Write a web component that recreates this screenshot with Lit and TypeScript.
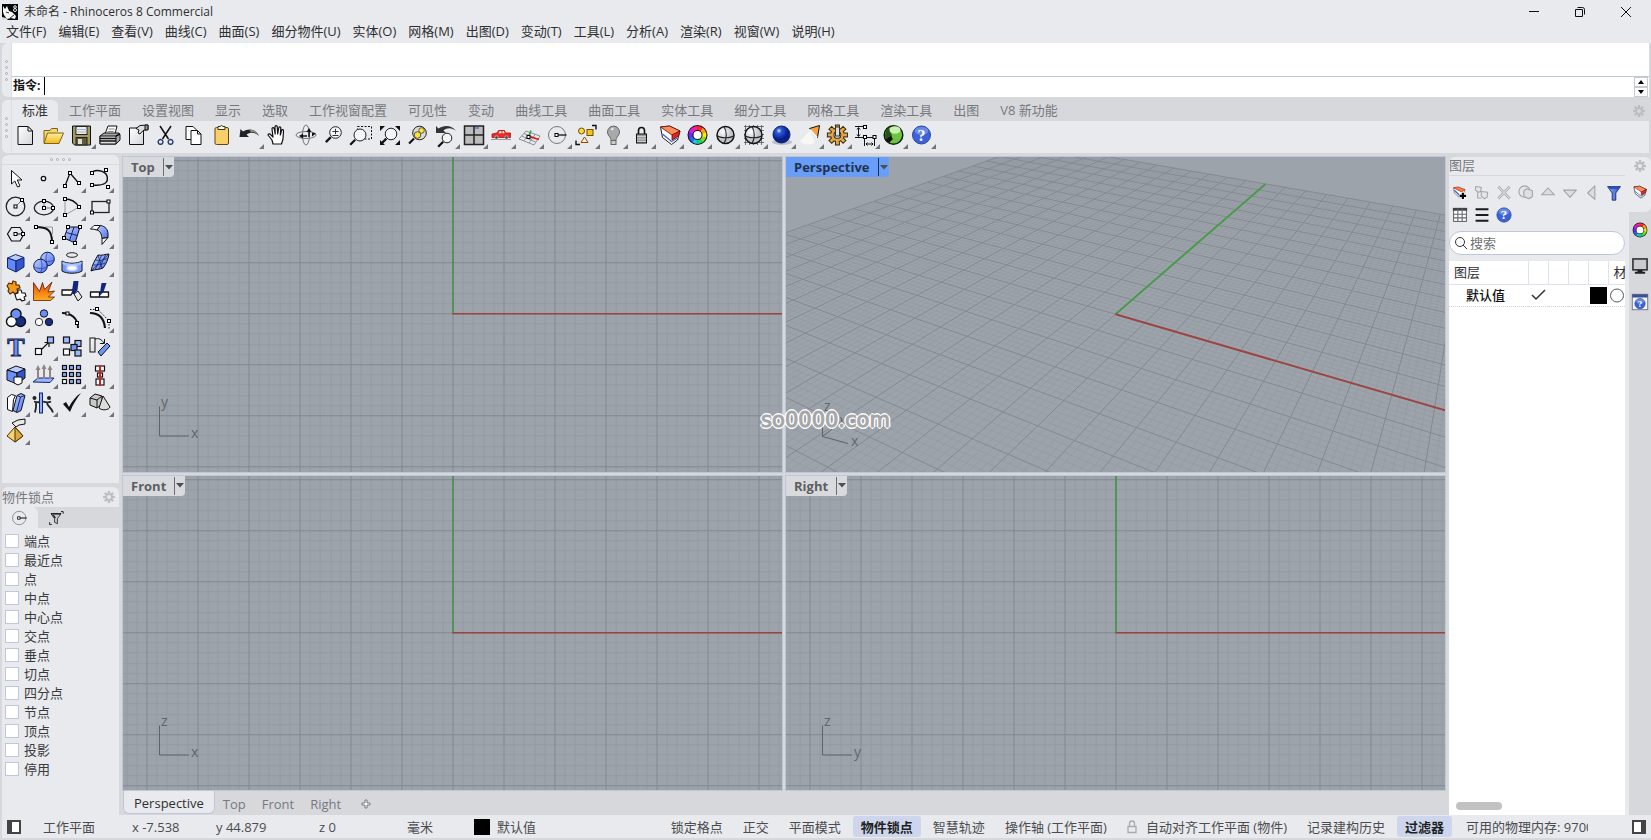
import { LitElement, html, css, svg } from "lit";
import { customElement, property } from "lit/decorators.js";
import { classMap } from "lit/directives/class-map.js";

/* ---------- icon primitives (28 x 28 cell) ---------- */
const K = "#111";
const node = (x: number, y: number) =>
  svg`<rect x=${x - 1.5} y=${y - 1.5} width="3" height="3" fill="#fff" stroke="#000"/>`;
const box = (x: number, y: number, s: number, f: string) =>
  svg`<rect x=${x} y=${y} width=${s} height=${s} fill=${f} stroke="#111" stroke-width="1.2"/>`;
const line = (d: string, c = K, w = 1) =>
  svg`<path d=${d} fill="none" stroke=${c} stroke-width=${w}/>`;
const shape = (d: string, f: string, c = K, w = 1) =>
  svg`<path d=${d} fill=${f} stroke=${c} stroke-width=${w} stroke-linejoin="round"/>`;
const lens = (x: number, y: number, r: number, f = "#f4f5f7") => svg`
  <path d=${`M${x - r * 0.8} ${y + r * 0.8}L${x - r * 0.8 - 5} ${y + r * 0.8 + 5}`} stroke="#111" stroke-width="2.2"/>
  <circle cx=${x} cy=${y} r=${r} fill=${f} stroke="#222"/>`;
const hue = (cx: number, cy: number, r: number, w: number) => {
  const cols = ["#ff2a1f", "#ff9a1a", "#f4ec19", "#7be01f", "#19d06a", "#17c9df", "#2767f5", "#6a2cf0", "#d21fe8", "#ff1f8f"];
  const pt = (a: number) => `${(cx + r * Math.sin(a)).toFixed(2)} ${(cy - r * Math.cos(a)).toFixed(2)}`;
  const st = (Math.PI * 2) / cols.length;
  return svg`<circle cx=${cx} cy=${cy} r=${r} fill="#fff" stroke="#111" stroke-width=${w + 2}/>
    ${cols.map((c, i) => svg`<path d=${`M${pt(i * st)}A${r} ${r} 0 0 1 ${pt((i + 1) * st + 0.03)}`} fill="none" stroke=${c} stroke-width=${w}/>`)}`;
};
const wedge = svg`
  ${shape("M4.500 6l9-1 10.500 5-2.500 9-6 4.500-9-7z", "#fff", "#222")}
  ${line("M6.500 13l9 7.500 6-3.500", "#4a66cf", 1.400)}
  ${shape("M4.500 6l9-1 10.500 5-8 4z", "#ff8a5c", "#5e1408", 0.800)}
  ${shape("M16 14l8-4-1.500 5-6.500 4z", "#e8221a", "#5e1408", 0.800)}`;
const help = (x: number, y: number, r: number) => svg`
  <circle cx=${x} cy=${y} r=${r} fill="#3c62d4" stroke="#2a45a8"/>
  <ellipse cx=${x} cy=${y - r * 0.45} rx=${r * 0.75} ry=${r * 0.45} fill="#7f9df0" opacity=".7"/>
  <text x=${x} y=${y + r * 0.62} text-anchor="middle" font-family="Liberation Serif, serif" font-weight="700" font-size=${Math.round(r * 1.8)} fill="#fff">?</text>`;
const gearPath = (() => {
  let d = "";
  for (let i = 0; i < 8; i++) {
    for (const [o, r] of [[-0.2, 4], [-0.14, 6], [0.14, 6], [0.2, 4]] as const) {
      const a = (i * Math.PI) / 4 + o * 1.4;
      d += `${d ? "L" : "M"}${(7 + r * Math.sin(a)).toFixed(2)} ${(7 - r * Math.cos(a)).toFixed(2)}`;
    }
  }
  return d + "zM9 7a2 2 0 1 0-4 0a2 2 0 1 0 4 0z";
})();
const gear = html`<svg width="14" height="14" viewBox="0 0 14 14" aria-hidden="true"><path d=${gearPath} fill="#bcbdc1" fill-rule="evenodd"/></svg>`;
const snapTarget = svg`<circle cx="13" cy="14" r="8.500" fill="none" stroke="#77797e"/>${line("M13 14h9.500", K, 1.3)}${node(12.5, 14)}`;
const sphere = svg`<circle cx="13.500" cy="14" r="8.500" fill="url(#ball)" stroke="#111" stroke-width="1.500"/>
  ${line("M5 14.500c3 3 14 3 17 0M12 5.500c3 5 3 12 0 17", "#222", 1.100)}`;

type Tool = { name: string; more?: boolean; art: unknown };
const t = (name: string, more: boolean, art: unknown): Tool => ({ name, more, art });

const MAIN_TOOLS: Tool[] = [
  t("新建", false, svg`${shape("M6 5.500h10l4.500 4.500v13.500H6z", "url(#page)")}${shape("M16 5.500V10h4.500z", "#fff")}`),
  t("打开", false, svg`${shape("M4 22V9.500h6l1.500-2h6v3", "#f7d774", "#7d6414")}${shape("M4 22.500l3.500-10.500h16L19 22.500z", "url(#gold)", "#7d6414")}`),
  t("保存", true, svg`${shape("M4.500 5h18v19H6.500l-2-2z", "#a39b5e")}<rect x="8" y="5.500" width="11" height="8" fill="#e9eef3" stroke="#222"/><path d="M8 8.500h11M8 11h11" stroke="#a9b4bd"/><rect x="8" y="16.500" width="11" height="7.500" fill="#5f5a37" stroke="#222"/><rect x="10" y="18" width="4" height="5" fill="#ddd"/>`),
  t("打印", false, svg`${shape("M9 13l3-8h9l-2 8z", "#fff")}${line("M12.500 8h6M11.500 10.500h6", "#888")}${shape("M4 15l4-3h15l1 2v5l-4 4H4z", "#a9a9a9")}${shape("M4 15h16v8H4z", "#dcdcdc")}${line("M4 17.500h16M4 20h16M20 15l4-2", K, 1.4)}`),
  t("文件属性", false, svg`${shape("M5.500 7h14v16.500h-14z", "url(#page)")}${shape("M12 7.500l4-3 8-.5v4.500l-5 1-3 3.500-2-1 1-3z", "#ddd")}${shape("M21 4h3v5h-3z", "#999")}`),
  t("剪切", false, svg`${line("M8 5l8.500 13M19 5l-8.500 13", K, 1.500)}${line("M8.500 18.500a2.400 2.400 0 1 0 .1 0zM18.500 18.500a2.400 2.400 0 1 0 .1 0z", "#23366f", 1.400)}`),
  t("复制", false, svg`${shape("M6 5.500h7l3 3v10H6z", "#fff")}${shape("M11 9.500h6.500l3.500 3.500v10.500H11z", "#fff")}${line("M17.500 9.500V13H21")}`),
  t("粘贴", false, svg`<rect x="7" y="6.500" width="13.500" height="17" rx="1.500" fill="#f8cf69" stroke="#5f4610"/><path d="M10 8.500h7v-3h-2l-1.500-1-1.500 1h-2z" fill="#fffdd0" stroke="#333"/>`),
  t("撤销", true, svg`<path d="M3.500 16l1-8 2.500 2.500C12 7 20 7.500 23 15c-4-4-9-4-12.500-1.500L13 16z" fill="#222"/><path d="M13 8.500c5 0 8 2 10 6.500-2-2.500-5-4-8-4z" fill="#8a8a8a"/>`),
  t("平移", false, shape("M9 23l-1-4-4-5c0-1.500 2-1.500 3 0l2 2-1-8c0-1.800 2-1.800 2.300 0l.9 5-.2-7c0-1.800 2.200-1.800 2.300 0l.4 7 1-6c.3-1.700 2.300-1.400 2.100.3l-.5 6.700 1.200-4.500c.5-1.500 2.300-1 2 .5L19 18l-1.500 5z", "#fff", K, 1.2)),
  t("旋转视图", false, svg`<ellipse cx="14" cy="14" rx="10" ry="3.500" fill="none" stroke="#777"/><ellipse cx="14" cy="14" rx="3.500" ry="10" fill="none" stroke="#777"/>${line("M17 10v6M10 15h5", K, 1.500)}<path d="M14.500 11l2.500-4 2.500 4zM11 12.500l-4 2.500 4 2.500zM24 12.500l-4-1v4z" fill="#111"/>`),
  t("缩放", false, svg`${lens(15.500, 11.500, 5.800)}${line("M12.500 10.500h6M15.500 7.800v5.400M12.500 14.500h6", "#333")}`),
  t("框选缩放", false, svg`<rect x="9.500" y="5.500" width="14" height="12.500" fill="none" stroke="#111" stroke-dasharray="2 1.500"/>${lens(12, 14, 6)}`),
  t("缩放至全部", false, svg`${lens(15, 13, 5.800)}<path d="M4 5h5L4 10zM24 5v5l-5-5zM4 24v-5l5 5zM24 24h-5l5-5z" fill="#111"/>`),
  t("缩放至选取", false, svg`${lens(15.500, 12, 6.800, "#dcdcdc")}<circle cx="17.500" cy="9.500" r="2.800" fill="#ffe52e" stroke="#555"/><circle cx="13.500" cy="14" r="3.300" fill="#ffe52e" stroke="#555"/>`),
  t("复原视图", true, svg`<path d="M4 12V5l2.500 2.500C12 3.500 20 4 24 10c-4-3.500-9-3.500-12.500-.5L14 12z" fill="#333"/>${lens(15, 17, 4.800)}`),
  t("四个视图", true, svg`<rect x="4.500" y="5" width="19" height="18.500" fill="#bdbdbd" stroke="#222" stroke-width="1.500"/><path d="M14 5v18.500M4.500 14h19" stroke="#222" stroke-width="1.500"/><path d="M14 7h5" stroke="#2a4ec9"/>`),
  t("图纸视图", true, svg`${line("M3 18.500h20", "#999")}${shape("M4 13l5-1 1.500-2.500h6l1 2.500h5v4.500H4z", "#ee2a24", "#a3120e", 0.8)}<path d="M11.500 10.300h2v2h-3zM14.500 10.300h1.500l.5 2h-2z" fill="#fff"/><circle cx="8.500" cy="16.500" r="1.700" fill="#444" stroke="#ddd" stroke-width=".6"/><circle cx="18.500" cy="16.500" r="1.700" fill="#444" stroke="#ddd" stroke-width=".6"/>`),
  t("工作平面", true, svg`${line("M3 18l7-8 14 5-6 9zM5.500 15l14 6M8 12.500l14 5.500M7.500 20l7-8.500M13 22l6.500-9", "#8f9095")}${line("M13 15.500l2-6", "#1fa83a", 1.5)}${line("M13 15.500l10 3", "#e02020", 1.8)}${node(12.5, 16)}`),
  t("物件锁点", true, snapTarget),
  t("选取", true, svg`${line("M4 19.500v4h4M20 4.500h4v4", K, 1.400)}<circle cx="9.500" cy="10" r="3" fill="#ffd93c" stroke="#6d5200"/><rect x="15" y="8.500" width="6" height="6" fill="#f8c01f" stroke="#6d5200"/>${shape("M12.500 16l3.500 5.500H9z", "#fff3d8", "#8d4c00")}`),
  t("隐藏", true, svg`<path d="M13.500 5a6 6 0 0 1 4.500 10c-1.500 1.500-2 3-2 4.500h-5c0-1.500-.5-3-2-4.500A6 6 0 0 1 13.500 5z" fill="#a9a9a9" stroke="#666"/><path d="M11.500 9a3 3 0 0 1 2-1.500" stroke="#eee" stroke-width="2"/><rect x="11" y="19.500" width="5" height="4" fill="#ccc" stroke="#666"/>`),
  t("锁定", true, svg`${line("M10.500 13V9.500a3 3 0 0 1 6 0V13", K, 1.600)}<rect x="8.500" y="13" width="10" height="9" fill="#999" stroke="#111"/>${line("M9 15.500h9M9 18h9M9 20.500h9", "#ccc")}`),
  t("图层", true, wedge),
  t("属性", true, hue(13.5, 14, 7, 4)),
  t("着色", true, sphere),
  t("着色选取", true, svg`${line("M4 5.500h20M4 9.500h20M4 13.500h20M4 17.500h20M4 21.500h20M5.500 4v20M9.500 4v20M13.500 4v20M17.500 4v20M21.500 4v20", "#55575c", 0.800)}${sphere}`),
  t("渲染", true, svg`<ellipse cx="14" cy="21" rx="10" ry="3" fill="#b9bdcc"/><circle cx="13.500" cy="13.500" r="8.500" fill="url(#blue)" stroke="#0b1e63"/>`),
  t("聚光灯", true, svg`<path d="M14 10L4 20c2 4 10 5 15 1z" fill="#f7f7f4"/>${shape("M13.500 7.500l10-3-2 12z", "#f6a339")}<path d="M14 8.500l7 7.500" stroke="#fff" stroke-width="1.500"/>`),
  t("选项", true, svg`<path d=${gearPath} transform="translate(1.500 2) scale(1.700)" fill="#e0a84c" fill-rule="evenodd" stroke="#3b2808" stroke-width=".6"/><rect x="11.500" y="6" width="4" height="9" fill="#ddd" stroke="#333"/>`),
  t("尺寸标注", true, svg`${line("M3 5.500h8M3 16.500h8M6.500 7v8M5 8.500L6.500 6.500 8 8.500M5 13.500l1.500 2 1.500-2M12.500 16v9M22.500 15v10M14 23h7M15.500 21.500L14 23l1.500 1.500M19.500 21.500L21 23l-1.500 1.500M11 5.500h3M11 16.500h11")}${node(13, 6)}${node(13, 16)}${node(22.500, 16)}`),
  t("Grasshopper", true, svg`<circle cx="13.500" cy="14" r="9.300" fill="#6cc43c" stroke="#0d2107" stroke-width="1.500"/><path d="M9 6.500c-5 4-5 11-1 14.500l4-6z" fill="#25521a"/><ellipse cx="15" cy="9" rx="5.500" ry="3.800" fill="#c9efb2"/><path d="M5 19l6-4 2 3-4 4z" fill="#111"/>`),
  t("说明", true, help(13.5, 14, 9)),
];

const BL = "url(#bl)";
const cubeArt = svg`${shape("M5.500 9l8-3.500 8.500 3-8 3.500z", "#b9ccff", "#14266b")}${shape("M5.500 9l8.500 3V23L5.500 19z", "#6288fb", "#14266b")}${shape("M14 12l8-3.500V18l-8 5z", "#3453cf", "#14266b")}`;
const SIDE_TOOLS: Tool[] = [
  t("选取", false, shape("M9.500 5.500v13.500l3.300-3 2.700 6 2.500-1-2.700-6h4.700z", "#fff")),
  t("点", true, svg`<circle cx="13.500" cy="13.500" r="2.200" fill="#fff" stroke="#111" stroke-width="1.300"/>`),
  t("多重直线", true, svg`${line("M7 21l5-13 9 10.500", K, 1.300)}${node(7, 21)}${node(12, 8)}${node(21, 18)}`),
  t("曲线", true, svg`${line("M6 8C8 4 19 5 21 11c2 7-3 10-15 9", K, 1.400)}${node(6, 8)}${node(20, 5)}${node(6, 20)}${node(22, 22)}`),
  t("圆", true, svg`<circle cx="13.500" cy="13.500" r="9.300" fill="none" stroke="#222" stroke-width="1.300"/>${line("M13.500 13.500l6.500-6.500", "#777")}${node(13.500, 13.500)}${node(20, 7)}`),
  t("椭圆", true, svg`<ellipse cx="14" cy="15" rx="9.700" ry="6.800" fill="none" stroke="#222" stroke-width="1.300"/>${line("M14 8v7h9", "#777")}${node(14, 8)}${node(14, 15)}${node(23, 15)}`),
  t("圆弧", true, svg`${line("M7 22V6M7 22l14-8", "#999")}${line("M7 6c6 0 11 3 14 8", K, 1.400)}${node(7, 6)}${node(21, 14)}${node(7, 22)}`),
  t("矩形", true, svg`<rect x="6" y="8.500" width="17" height="11" fill="none" stroke="#222" stroke-width="1.300"/>${node(22.500, 8.500)}${node(6, 19.500)}`),
  t("多边形", true, svg`${line("M9.500 6.500h8.500l4 6.500-4 7H9.500l-4-7z", K, 1.200)}${line("M13.500 13h8")}${node(13.500, 13)}${node(21, 13)}`),
  t("曲线圆角", true, svg`${line("M15 6h7.500v7", "#999")}${line("M6 6c11 0 16 3 16 15", K, 2)}${node(6, 6)}${node(22, 21)}`),
  t("曲面", true, svg`${shape("M10 6h12l-5 16-11-5z", BL)}${line("M16 6l-4.500 13.500M8 11.500l11.500 3", "#14266b")}${node(10, 6)}${node(22, 6)}${node(17, 22)}${node(6, 17)}`),
  t("扫掠", true, svg`${shape("M4.500 8l3.500-3.500h6.500L11 9c-2-.7-4-1-6.500-1z", "#fff")}${shape("M11 9l3.500-4.500c5 1 7.500 4 7.500 8.500v3.500l-6 1c-.5-5-2-7.500-5-8.500z", BL)}${shape("M16 17.500l6-1-6 7z", "#fff")}`),
  t("立方体", true, cubeArt),
  t("球体", true, svg`<circle cx="17.500" cy="10" r="6.800" fill=${BL} stroke="#0f1c4f"/>${line("M17.500 3.200c-2 4-2 9 0 13.600M11 11c4 2 9 2 13 0", "#2b4199", .8)}<circle cx="10.500" cy="17" r="6.800" fill=${BL} stroke="#0f1c4f"/>${line("M10.500 10.200c2 4 2 9 0 13.600M4 18c4 2 9 2 13 0", "#2b4199", .8)}`),
  t("投影曲线", true, svg`<ellipse cx="14" cy="6" rx="5.500" ry="2.300" fill="none" stroke="#222"/>${shape("M4 12c5 3 15 3 20 0v10c-5 3-15 3-20 0z", "#7d9cff")}<path d="M4.500 12.500c5 3 14 3 19 0v2.500c-5 3-14 3-19 0z" fill="#a9c0ff"/><ellipse cx="14" cy="19" rx="5" ry="2.500" fill="#fff" stroke="#c6d4ff" stroke-width="1.500"/>`),
  t("网格", true, svg`${shape("M12 6c4 1 7-1 11-1-1 6-3 10-6 14-4 2-8 1-12 3 1-6 4-11 7-16z", BL)}${line("M9.500 11c4 1 8 0 12-1.500M7 16c4 0 8 0 12-2M15.500 6.500L9 21M19.500 6L13 20M12 6l4 13M22.500 5.500L6 21", "#14266b", .8)}`),
  t("组合", true, svg`${shape("M5 9l2-3 3 1 1-3 3 1v3l3 0 1 3-3 1 1 3-3 2-2-2-3 2-2-3 1-2z", "#f39a1e", "#4f2d00", 1.200)}${shape("M13 17l3-1 0-3 3 0 1 3 3 0 1 3-2 1 1 3-3 1-2-2-3 1-1-2z", "#fff", K, 1.100)}`),
  t("炸开", false, shape("M3.500 23.500V5.500l6 9 3-9 2 7L22 5l-4 10 6.500-1-6 6 6 0-4 3.500z", "url(#fire)", "#5e1c00", .8)),
  t("修剪", false, svg`${shape("M4 13h12l-3 5H4z", "#fff", K, 1.300)}<path d="M15.500 4h5l-1 9-3 4h-3z" fill="#12277c"/>${shape("M16 17l4-3 4 6-4 4z", "#e6e6e6")}`),
  t("分割", false, svg`${shape("M4.500 15h9v5h-9zM13.500 15h9v5h-9z", "#fff", K, 1.300)}<path d="M15.500 6h5l-3 9-4 4z" fill="#12277c"/>`),
  t("群组", true, svg`<g stroke="#111" stroke-width="3.500"><circle cx="14" cy="9" r="4"/><circle cx="9.500" cy="16.500" r="4"/><circle cx="18.500" cy="16.500" r="4"/></g><circle cx="9.500" cy="16.500" r="4.300" fill="#fff"/><circle cx="18.500" cy="16.500" r="4.300" fill="#16307f"/><circle cx="14" cy="9" r="4.300" fill="#6c8ff5"/>`),
  t("解散群组", false, svg`<circle cx="14" cy="8.500" r="3.700" fill="#6c8ff5" stroke="#111"/><circle cx="9" cy="17" r="3.700" fill="#fff" stroke="#333"/><circle cx="19" cy="17" r="3.700" fill="#16307f" stroke="#111"/>`),
  t("显示控制点", false, svg`${line("M4 8c9 0 16 5 16 15", K, 2)}${node(9.500, 8.500)}${node(19, 18)}`),
  t("编辑点", true, svg`${line("M4 8c9 0 14 5 15 15", K, 2.200)}<path d="M4 4.500h8l11 11.500v8" fill="none" stroke="#111" stroke-dasharray="1.500 1.500"/>${node(11, 4)}${node(23, 16)}`),
  t("文字物件", false, svg`<text x="14" y="23" text-anchor="middle" font-family="Liberation Serif, serif" font-weight="700" font-size="26" fill="#6c8ff5" stroke="#101c52" stroke-width="1">T</text>`),
  t("移动", true, svg`${line("M12 16l6-6M14.500 9.500H19V14", K, 1.200)}${box(5.500, 15.500, 6, "#fff")}${box(17.500, 4, 6, "#9db9ff")}`),
  t("阵列", false, svg`${box(5.500, 4, 6, "#9db9ff")}${box(17, 7.500, 6, "#9db9ff")}${box(13, 11.500, 6, "#6f94f5")}${box(5.500, 16, 6, "#fff")}${box(17, 17, 6, "#9db9ff")}`),
  t("旋转", false, svg`<rect x="4" y="5" width="5" height="14" fill="url(#page)" stroke="#111"/>${line("M9 6c4-1 6 0 9 4M18.500 6v4.500H14")}${shape("M12 19l9-9 3 3-9 10z", "#6f94f5")}`),
  t("布尔运算", true, svg`${shape("M5 9l9-4 9 3-8 4z", "#b9ccff")}${shape("M5 9l10 3v11L5 19z", "#6b90fb")}${shape("M15 12l8-4v9l-8 6z", "#3453cf")}${shape("M12 16h8v6l-4 2-4-2z", "#fff")}`),
  t("挤出", true, svg`${shape("M3 21l5-4h16l-4 4.500z", "#9ab4ff", "#14266b")}${line("M8 18V7M14 18V6M20 18V7", "#8e8782", 2)}<path d="M5.500 9L8 4l2.500 5zM11.500 8L14 3l2.500 5zM17.500 9L20 4l2.500 5z" fill="#8e8782"/>`),
  t("矩形阵列", true, svg`${[4.500, 11.500, 18.500].map((y, r) => [4.500, 11.500, 18.500].map((x, c) => box(x, y, 4, r === 2 && c === 0 ? "#fff" : "#8eabff")))}`),
  t("对齐", true, svg`<g fill="#fff" stroke="#111" stroke-width="1.200"><rect x="9.500" y="5" width="9" height="5"/><rect x="11.500" y="12" width="5" height="4"/><rect x="10" y="18" width="8" height="6"/></g>${line("M14 4v21", "#d02020", 2)}`),
  t("镜像", true, svg`${shape("M5.500 8.500l4-3 4 1-2 4-1 12-5-2z", "#fff")}${shape("M15 6.500l4-2 4 2-4 15-4 2-4-2z", BL)}${line("M15 6.500l3.500 1.500 4.500-1.500M18.500 8l-4 15", "#14266b")}`),
  t("变形", true, svg`<circle cx="4.500" cy="9" r="2" fill="#222"/><circle cx="19" cy="9" r="2" fill="#222"/>${line("M4 12.500c3 1 6 1 9 0M6 13.500v5l-1 5M21 12.500c-2 1-5 1-8 0M17 13.500c0 4 4 4 6 10", "#222", 1.800)}<rect x="9.500" y="4" width="3" height="20" fill="#8eabff" stroke="#14266b"/>`),
  t("检查", true, svg`<path d="M5 15l3-2 3 5C14 12 18 7 23 4c-4 5-8 11-11 19z" fill="#111"/>`),
  t("实体工具", true, svg`${shape("M4 9l5-4 7 2v8l-5 4-7-3z", "#c9c9c9")}${line("M4 9l7 2 5-4M11 11v8")}${shape("M17 7l7 11c-1 3-8 4-11 1z", "#dcdcdc")}`),
  t("显示方向", true, svg`${shape("M10 6l6-3 7-1v5l-6 1-3 2z", "#e9e9e9")}${shape("M13 10l8 9-8 6-8-6z", "#f6d371", "#4a3000")}${shape("M13 10l8 9-8 6z", "#d8aa42", "#4a3000")}`),
];

const LAYER_TOOLS: Tool[] = [
  t("新图层", false, svg`${shape("M5 7l5 1 11 1-2 8-5 4-8-7z", "#fff", "#667")}${shape("M5 6.500l7-1 9 4-5 3z", "#ff7c4c", "#a33a18")}${line("M6 10l8 8", "#4a66cf", 2)}<path d="M13 18h10M18 13v10" stroke="#fff" stroke-width="5"/><path d="M13.500 18h9M18 13.500v9" stroke="#000" stroke-width="3"/>`),
  t("子图层", false, svg`${shape("M5 5l8 1-1 6-3 1-4-3zM13 12l9 1-1 7-4 2-4-4z", "#e6e6e6", "#a3a4a8", 1.500)}${line("M8 13v8h5", "#a3a4a8", 1.500)}`),
  t("删除", false, svg`${line("M6 5l16 17M22 5L6 22", "#a3a4a8", 3.500)}${line("M6 5l16 17M22 5L6 22", "#dcdde0", 1.500)}`),
  t("复制图层", false, svg`<circle cx="12" cy="12" r="8" fill="#e6e6e6" stroke="#a3a4a8" stroke-width="1.500"/>${shape("M11 11l4-3 8 3v8l-5 3-7-3z", "#dedfe1", "#a3a4a8", 1.500)}`),
  t("上移", false, shape("M14 7l9 9.500H5z", "#dcdde0", "#a3a4a8", 1.500)),
  t("下移", false, shape("M14 20l9-10H5z", "#dcdde0", "#a3a4a8", 1.500)),
  t("上一层", false, shape("M18 4v19L8 14z", "#dcdde0", "#a3a4a8", 1.500)),
  t("过滤", false, svg`${shape("M5 5h18l-6.500 9V24h-5V14z", "url(#blue2)", "#17307a", 1.300)}<ellipse cx="14" cy="6.500" rx="7.500" ry="1.800" fill="#2c50b5"/>`),
  t("栏位", false, svg`<rect x="5" y="5" width="18" height="18" fill="#fff" stroke="#66686d" stroke-width="1.500"/><rect x="4" y="4" width="20" height="4" fill="#3f4145"/>${line("M11 5v18M17 5v18M5 13h18M5 18h18", "#66686d", 1.500)}`),
  t("菜单", false, line("M5 6h18M5 14h18M5 22h18", "#1b1b1b", 3)),
  t("说明", false, help(14, 14, 10)),
];
const SIDE_TABS: Tool[] = [
  t("属性", false, hue(14, 14, 8.5, 4)),
  t("显示", false, svg`<rect x="3" y="3" width="22" height="17" fill="#c9cbd0" stroke="#333" stroke-width="2.500"/><path d="M10 20h8v3h4v3H6v-3h4z" fill="#222"/>`),
  t("说明", false, svg`<rect x="2" y="2" width="24" height="24" fill="#f4f5f8" stroke="#6d7899" stroke-width="1.500"/><path d="M2 2h24v5H2z" fill="#3a4f8f"/>${help(14, 16.500, 8)}`),
];

/* gradients that the icons refer to */
const defs = svg`<defs>
  <linearGradient id="page" x2="1" y2="1"><stop offset="0" stop-color="#fff"/><stop offset="1" stop-color="#d3d5d9"/></linearGradient>
  <linearGradient id="gold" x2="0" y2="1"><stop offset="0" stop-color="#fff0a0"/><stop offset="1" stop-color="#f4b71c"/></linearGradient>
  <linearGradient id="fire" x2="0" y2="1"><stop offset="0" stop-color="#e8480c"/><stop offset="1" stop-color="#ffae1e"/></linearGradient>
  <linearGradient id="bl" x2="1" y2="1"><stop offset="0" stop-color="#c3d2ff"/><stop offset="1" stop-color="#4a6ff0"/></linearGradient>
  <linearGradient id="blue2" x2="1"><stop offset="0" stop-color="#8fb0ff"/><stop offset="1" stop-color="#2a52c4"/></linearGradient>
  <radialGradient id="ball" cx=".35" cy=".3"><stop offset="0" stop-color="#fff"/><stop offset="1" stop-color="#c2c4c9"/></radialGradient>
  <radialGradient id="blue" cx=".35" cy=".28"><stop offset="0" stop-color="#dfe8ff"/><stop offset=".3" stop-color="#2d5be0"/><stop offset="1" stop-color="#0a1f8a"/></radialGradient>
</defs>`;
const glyph = (art: unknown, size = 28) =>
  html`<svg width=${size} height=${size} viewBox="0 0 28 28" aria-hidden="true">${defs}${art}</svg>`;

/* ---------- modelling viewport ---------- */
const MINOR = "#949aa2";
const MAJOR = "#858991";
const STEP = 10.2;
const SPAN = 70;

/** Homography of the construction plane relative to the viewport centre; units are major squares. */
const project = (u: number, v: number): [number, number] => {
  const d = 1 - 0.02156 * u + 0.0449 * v;
  return [(28.58 * u + 17.45 * v) / d, (8.33 * u - 15.16 * v) / d];
};
const seg = (u1: number, v1: number, u2: number, v2: number) =>
  `M${project(u1, v1).map((n) => n.toFixed(2)).join(" ")}L${project(u2, v2).map((n) => n.toFixed(2)).join(" ")}`;

const planePaths = (() => {
  let minor = "";
  let major = "";
  for (let k = -SPAN; k <= SPAN; k++) {
    const s = k / 5;
    const d = seg(s, -14, s, 14) + seg(-14, s, 14, s);
    if (k % 5) minor += d;
    else major += d;
  }
  return { minor, major };
})();
const orthoPaths = (() => {
  let minor = "";
  let major = "";
  const e = SPAN * STEP;
  for (let k = -SPAN; k <= SPAN; k++) {
    const p = Math.round(k * STEP);
    const d = `M${p + 0.5} ${-e}V${e}M${-e} ${p - 0.5}H${e}`;
    if (k % 5) minor += d;
    else major += d;
  }
  return { minor, major };
})();

@customElement("view-pane")
export class ViewPane extends LitElement {
  @property() name = "";
  @property() axes = "x,y";
  @property({ type: Boolean }) perspective = false;
  @property({ type: Boolean }) active = false;

  static styles = css`
    :host { display: block; position: relative; overflow: hidden; background: #9da3ab; outline: 1px solid #bfc6d8; }
    .canvas { position: absolute; inset: 0; width: 100%; height: 100%; }
    .mark { font: 14px "Open Sans", sans-serif; fill: #63656a; }
    .title { position: absolute; top: 0; left: 0; display: flex; align-items: center; height: 20px; background: #d9dade; border-radius: 0 0 4px 0; }
    .title.active { background: #689df8; }
    button { border: 0; background: none; margin: 0; padding: 0; height: 20px; font: 700 13px/20px "Open Sans", sans-serif; color: #5c5e62; }
    .name { padding: 0 8px; }
    .active .name { color: #22324e; }
    .drop { width: 11px; height: 18px; border-left: 1px solid #6c6e73; display: grid; place-items: center; }
    .active .drop { border-color: #22324e; color: #22324e; }
  `;

  render() {
    const paths = this.perspective ? planePaths : orthoPaths;
    const [h, v] = this.axes.split(",");
    return html`
      <svg class="canvas" aria-label=${this.name}>
        <svg x="50%" y="50%" overflow="visible">
          <path d=${paths.minor} fill="none" stroke=${MINOR} stroke-width=${this.perspective ? 0.7 : 1}></path>
          <path d=${paths.major} fill="none" stroke=${MAJOR} stroke-width="1"></path>
          ${this.perspective
            ? svg`<path d=${seg(0, 0, 0, 14)} stroke="#4a9a4c" stroke-width="2"/><path d=${seg(0, 0, 14, 0)} stroke="#9c4643" stroke-width="2"/>`
            : svg`<path d="M.500 0V-714" stroke="#45924a" stroke-width="1.600"/><path d="M0 -.500H714" stroke="#99443f" stroke-width="1.600"/>`}
        </svg>
        <svg x="0" y="100%" overflow="visible">
          ${this.perspective
            ? svg`<path d="M36.500 -60V-35L62 -28M36.500 -35L56 -50" fill="none" stroke="#606267"/>
                <text class="mark" x="38" y="-61">z</text><text class="mark" x="54" y="-47">y</text><text class="mark" x="65" y="-26">x</text>`
            : svg`<path d="M36.500 -65V-35.500H66" fill="none" stroke="#606267"/>
                <text class="mark" x="38" y="-65">${v}</text><text class="mark" x="68" y="-34">${h}</text>`}
        </svg>
      </svg>
      <div class=${classMap({ title: true, active: this.active })}>
        <button class="name">${this.name}</button>
        <button class="drop" aria-label=${`${this.name} 菜单`}>
          <svg width="8" height="5" viewBox="0 0 8 5"><path d="M0 0h8L4 4.500z" fill="#4c4e52"/></svg>
        </button>
      </div>`;
  }
}

/* ---------- application shell ---------- */
const MENUS = ["文件(F)", "编辑(E)", "查看(V)", "曲线(C)", "曲面(S)", "细分物件(U)", "实体(O)", "网格(M)", "出图(D)", "变动(T)", "工具(L)", "分析(A)", "渲染(R)", "视窗(W)", "说明(H)"];
const TABS = ["标准", "工作平面", "设置视图", "显示", "选取", "工作视窗配置", "可见性", "变动", "曲线工具", "曲面工具", "实体工具", "细分工具", "网格工具", "渲染工具", "出图", "V8 新功能"];
const SNAPS = ["端点", "最近点", "点", "中点", "中心点", "交点", "垂点", "切点", "四分点", "节点", "顶点", "投影", "停用"];

@customElement("app-root")
export class AppRoot extends LitElement {
  static styles = css`
    :host {
      display: flex; flex-direction: column; height: 100vh; min-height: 700px; box-sizing: border-box; padding-bottom: 2px;
      background: #d7d8dc; color: #2e2f31; overflow: hidden;
      font: 13px/20px "Open Sans", "Noto Sans CJK SC", sans-serif;
    }
    * { box-sizing: border-box; }
    button { border: 0; margin: 0; padding: 0; background: none; font: inherit; color: inherit; white-space: nowrap; }
    svg { display: block; }

    .titlebar { display: flex; align-items: center; height: 22px; background: #e9eaee; padding: 1px 2px 0; gap: 6px; }
    .titlebar h1 { margin: 0; font-size: 12px; font-weight: 400; flex: 1; }
    .win { width: 46px; height: 20px; display: grid; place-items: center; }
    .menubar { display: flex; align-items: flex-start; gap: 12px; height: 21px; background: #e9eaee; padding-left: 6px; line-height: 18px; }

    .command { display: flex; height: 54px; margin: 0 2px; }
    .grip { width: 10px; flex: none; display: flex; flex-direction: column; align-items: center; gap: 3px; padding-top: 17px; background: #e9eaee; border-radius: 6px 0 0 6px; border-right: 1px solid #dcdde1; }
    .dot { width: 3px; height: 3px; border: 1px solid #abacb0; border-radius: 50%; }
    .console { flex: 1; display: flex; flex-direction: column; background: #fff; }
    .history { height: 34px; border-bottom: 1px solid #c0c7dc; }
    .prompt { display: flex; align-items: flex-start; height: 20px; padding-left: 1px; font-weight: 700; font-size: 12px; line-height: 18px; color: #111; gap: 4px; }
    .prompt input { flex: 1; height: 18px; border: 0; border-left: 1px solid #000; outline: 0; padding: 0 2px; font: inherit; }
    .spin { display: flex; flex-direction: column; padding-right: 1px; }
    .spin button { width: 14px; height: 10px; border: 1px solid #c9cace; display: grid; place-items: center; }

    .toolbar { display: flex; height: 53px; margin: 3px 2px 0; background: #e9eaee; border-radius: 6px 0 0 6px; }
    .bars { flex: 1; min-width: 0; }
    .tabs { display: flex; gap: 1px; height: 21px; background: #d7d8dc; color: #77787c; }
    .tabs button { padding: 0 10px 2px; line-height: 18px; }
    .tabs .on { background: #e9eaee; color: #2e2f31; border-radius: 0 6px 0 0; }
    .tabs .opt { margin-left: auto; padding: 0 3px; }
    .tools { display: flex; }
    .tool { position: relative; width: 28px; height: 28px; }
    .more::after { content: ""; position: absolute; right: 0; bottom: 0; border: solid transparent; border-width: 5px 0 0 5px; border-bottom: 5px solid #737479; border-top: 0; }

    .work { flex: 1; min-height: 0; display: grid; grid-template-columns: 117px minmax(0, 1fr) 202px; padding-left: 2px; }
    .left { display: flex; flex-direction: column; padding-top: 2px; min-height: 0; }
    .palette { background: #e9eaee; border-radius: 6px 6px 0 0; height: 328px; }
    .handle { display: flex; justify-content: center; align-items: center; gap: 3px; height: 10px; border-bottom: 1px solid #dadbdf; }
    .cells { display: grid; grid-template-columns: repeat(4, 28px); }
    .osnap { flex: 1; margin-top: 4px; background: #e9eaee; border-radius: 6px 6px 0 0; }
    .head { display: flex; align-items: center; justify-content: space-between; height: 20px; color: #77787c; padding-right: 3px; }
    .subtabs { display: flex; height: 21px; background: #d7d8dc; margin-bottom: 3px; }
    .subtabs button { width: 36px; height: 21px; display: grid; place-items: center; }
    .subtabs .on { background: #e9eaee; border-radius: 0 6px 0 0; }
    .snap { display: flex; align-items: center; gap: 5px; height: 19px; padding-left: 3px; line-height: 18px; color: #3a3b3e; }
    .snap input { appearance: none; width: 14px; height: 14px; margin: 0; background: #fff; border: 1px solid #c0c7dc; }

    .stage { display: flex; flex-direction: column; min-width: 0; padding: 4px 4px 0; }
    .views { flex: 1; min-height: 0; display: grid; grid-template: 1fr 1fr / 1fr 1fr; gap: 4px; }
    .viewtabs { display: flex; height: 25px; padding-top: 1px; color: #77787c; }
    .viewtabs button { padding: 2px 8px 0; height: 23px; }
    .viewtabs .on { background: #e9eaee; color: #2e2f31; border: 1px solid #bfc6dc; border-top: 0; border-radius: 0 0 6px 6px; padding: 2px 10px 0; }

    .right { display: flex; min-height: 0; padding-top: 4px; }
    .panel { flex: 1; min-width: 0; display: flex; flex-direction: column; background: #e9eaee; border-radius: 6px 0 0 0; padding-right: 4px; }
    .panel h2, .osnap h2 { margin: 0; font-size: 13px; font-weight: 400; color: #77787c; line-height: 16px; }
    .panel h2 { height: 19px; border-bottom: 1px solid #d7d8dc; }
    .layertools { display: grid; grid-template-columns: repeat(8, 22px); padding-top: 6px; }
    .layertools button { width: 22px; height: 22px; display: grid; place-items: center; }
    .search { display: flex; align-items: center; gap: 2px; height: 24px; margin-top: 5px; padding: 0 4px; background: #fff; border: 1px solid #bfc6dc; border-radius: 12px; }
    .search input { flex: 1; min-width: 0; border: 0; outline: 0; background: none; font: inherit; padding: 0; }
    .search input::placeholder { color: #707174; opacity: 1; }
    .sheet { flex: 1; margin-top: 6px; background: #fff; overflow: hidden; display: flex; flex-direction: column; justify-content: space-between; }
    table { width: 100%; border-collapse: collapse; table-layout: fixed; }
    th { height: 23px; padding: 0 0 0 5px; font-weight: 400; text-align: left; border-right: 1px solid #dfe2e9; border-bottom: 1px solid #dfe2e9; white-space: nowrap; overflow: hidden; }
    th:last-child { border-right: 0; }
    td { height: 22px; padding: 0; border-bottom: 1px dotted #d3d4d8; }
    td:first-child { padding-left: 17px; font-weight: 500; color: #111; }
    .flag { width: 20px; }
    .mat { width: 17px; }
    .thumb { width: 46px; height: 8px; margin: 0 0 5px 7px; border-radius: 4px; background: #c2c2c3; }
    .rail { width: 22px; display: flex; flex-direction: column; align-items: center; background: #d7d8dc; }
    .rail button { width: 20px; height: 36px; display: grid; place-items: center; }
    .railhead { width: 22px; background: #e9eaee; border-radius: 0 6px 6px 0; display: flex; flex-direction: column; align-items: center; height: 55px; }
    .railhead .cog { height: 17px; }

    .status { display: flex; align-items: center; height: 23px; margin-left: 2px; background: #e9eaee; color: #4b4c4f; overflow: hidden; line-height: 18px; }
    .status .ic { padding: 0 5px; }
    .plane { width: 106px; padding-left: 17px; text-align: left; }
    .cx { width: 84px; }
    .cy { width: 103px; }
    .cz { width: 88px; }
    .unit { width: 67px; }
    .cur { display: flex; align-items: center; gap: 7px; flex: 1; white-space: nowrap; }
    .chip { width: 16px; height: 16px; background: #000; }
    .modes { display: flex; align-items: center; gap: 4px; }
    .modes button { height: 21px; padding: 0 8px; border-radius: 3px; display: flex; align-items: center; gap: 9px; }
    .modes .on { background: #cdd6ec; color: #1e1f22; font-weight: 700; }
    .mem { width: 122px; overflow: hidden; white-space: nowrap; margin: 0 39px 0 14px; }

    .watermark {
      position: absolute; left: 50%; top: 50%; transform: translate(-50%, -50%); pointer-events: none;
      font: 21px/24px "DejaVu Sans", sans-serif; color: #a5a6a8; -webkit-text-stroke: 1px #a5a6a8;
      text-shadow: 2px 0 #fff, -2px 0 #fff, 0 2px #fff, 0 -2px #fff, 1px 1px #fff, -1px -1px #fff, 1px -1px #fff, -1px 1px #fff;
    }
  `;

  private tool = (x: Tool) => html`
    <button class=${classMap({ tool: true, more: !!x.more })} aria-label=${x.name}>${glyph(x.art)}</button>`;

  private dots = () => [0, 1, 2, 3].map(() => html`<span class="dot"></span>`);

  private header() {
    return html`
      <header class="titlebar">
        <svg width="16" height="16" viewBox="0 0 16 16" aria-hidden="true">
          <rect width="16" height="16" fill="#050505"/>
          <path d="M1 2l2 3 2-3 2 5 3 1 4 4-1 3-4-1-4 1-3-4-1-3z" fill="#f5f5f5"/>
          <path d="M0 13l4 1 2 2H0z" fill="#ddd"/>
          <path d="M4 8l3 1M8 14l4-3" stroke="#333" fill="none"/>
          <circle cx="13" cy="3" r="1.300" fill="none" stroke="#eee"/><circle cx="13" cy="6" r="1.500" fill="none" stroke="#eee"/>
        </svg>
        <h1>未命名 - Rhinoceros 8 Commercial</h1>
        <div class="tools">
          <button class="win" aria-label="最小化"><svg width="12" height="12"><path d="M1 5.500h10" stroke="#111"/></svg></button>
          <button class="win" aria-label="还原"><svg width="12" height="12"><path d="M1.500 3.500h7v7h-7z M3.500 1.500h5q2 0 2 2v5" fill="none" stroke="#111"/></svg></button>
          <button class="win" aria-label="关闭"><svg width="12" height="12"><path d="M1 1l10 10M11 1L1 11" stroke="#111"/></svg></button>
        </div>
      </header>
      <nav class="menubar">${MENUS.map((m) => html`<button>${m}</button>`)}</nav>
      <section class="command">
        <div class="grip">${this.dots()}</div>
        <div class="console">
          <div class="history"></div>
          <div class="prompt">
            <label for="cmd">指令:</label><input id="cmd" type="text" />
            <div class="spin">
              <button aria-label="上"><svg width="6" height="4"><path d="M0 4h6L3 0z"/></svg></button>
              <button aria-label="下"><svg width="6" height="4"><path d="M0 0h6L3 4z"/></svg></button>
            </div>
          </div>
        </div>
      </section>
      <section class="toolbar">
        <div class="grip">${this.dots()}</div>
        <div class="bars">
          <div class="tabs">
            ${TABS.map((n, i) => html`<button class=${i ? "" : "on"}>${n}</button>`)}
            <button class="opt" aria-label="选项">${gear}</button>
          </div>
          <div class="tools">${MAIN_TOOLS.map(this.tool)}</div>
        </div>
      </section>`;
  }

  private leftSide() {
    return html`<aside class="left">
      <div class="palette">
        <div class="handle">${this.dots()}</div>
        <div class="cells">${SIDE_TOOLS.map(this.tool)}</div>
      </div>
      <div class="osnap">
        <div class="head"><h2>物件锁点</h2>${gear}</div>
        <div class="subtabs">
          <button class="on" aria-label="锁点">${glyph(snapTarget, 22)}</button>
          <button aria-label="过滤">${glyph(svg`${line("M5 20v3h3M21 5h3v3", K, 1.300)}${shape("M7 8h14l-5 7v7l-4-2v-5z", "#c6c7ca", "#333", 1.300)}${line("M7 8h14M13 14l-3-4", "#222", 2)}`, 20)}</button>
        </div>
        ${SNAPS.map((s) => html`<label class="snap"><input type="checkbox" />${s}</label>`)}
      </div>
    </aside>`;
  }

  private rightSide() {
    return html`<aside class="right">
      <div class="panel">
        <h2>图层</h2>
        <div class="layertools">${LAYER_TOOLS.map((x) => html`<button aria-label=${x.name}>${glyph(x.art, 20)}</button>`)}</div>
        <label class="search">
          <svg width="14" height="14"><circle cx="6" cy="6" r="4.500" fill="none" stroke="#333"/><path d="M9 9l4 4" stroke="#333"/></svg>
          <input type="search" placeholder="搜索" aria-label="搜索" />
        </label>
        <div class="sheet">
          <table>
            <thead><tr><th>图层</th><th class="flag"></th><th class="flag"></th><th class="flag"></th><th class="flag"></th><th class="mat">材质</th></tr></thead>
            <tbody><tr>
              <td>默认值</td>
              <td><svg width="20" height="14"><path d="M4 7l4 4 9-9" fill="none" stroke="#333" stroke-width="1.500"/></svg></td>
              <td></td><td></td>
              <td><svg width="20" height="17"><path d="M2 0h17v17H2z"/></svg></td>
              <td><svg width="17" height="15"><circle cx="9" cy="7.500" r="6.500" fill="#fff" stroke="#55575c"/></svg></td>
            </tr></tbody>
          </table>
          <div class="thumb"></div>
        </div>
      </div>
      <div class="rail">
        <div class="railhead"><button class="cog" aria-label="选项">${gear}</button><button aria-label="图层">${glyph(wedge, 18)}</button></div>
        ${SIDE_TABS.map((x) => html`<button aria-label=${x.name}>${glyph(x.art, 18)}</button>`)}
      </div>
    </aside>`;
  }

  private dock(flip: boolean) {
    return html`<svg width="14" height="14"><path d="M1 1h12v12H1z" fill="#fff" stroke="#444" stroke-width="2"/><path d=${flip ? "M9 0h5v14H9z" : "M0 0h5v14H0z"} fill="#444"/></svg>`;
  }

  render() {
    return html`
      ${this.header()}
      <main class="work">
        ${this.leftSide()}
        <section class="stage">
          <div class="views">
            <view-pane name="Top" axes="x,y"></view-pane>
            <view-pane name="Perspective" perspective active></view-pane>
            <view-pane name="Front" axes="x,z"></view-pane>
            <view-pane name="Right" axes="y,z"></view-pane>
          </div>
          <div class="viewtabs">
            <button class="on">Perspective</button><button>Top</button><button>Front</button><button>Right</button>
            <button aria-label="新增"><svg width="20" height="10"><path d="M8 1h2v3h3v2h-3v3H8v-3H5V4h3z" fill="#fff" stroke="#77787c"/></svg></button>
          </div>
        </section>
        ${this.rightSide()}
      </main>
      <footer class="status">
        <button class="ic" aria-label="左侧栏">${this.dock(false)}</button>
        <button class="plane">工作平面</button>
        <span class="cx">x -7.538</span><span class="cy">y 44.879</span><span class="cz">z 0</span>
        <span class="unit">毫米</span>
        <span class="cur"><span class="chip"></span>默认值</span>
        <div class="modes">
          <button>锁定格点</button><button>正交</button><button>平面模式</button><button class="on">物件锁点</button>
          <button>智慧轨迹</button><button>操作轴 (工作平面)</button>
          <button><svg width="10" height="14"><path d="M2.500 6V3.500a2.500 2.500 0 0 1 5 0V6M1 6.500h8v6H1z" fill="none" stroke="#a9aaae" stroke-width="1.300"/></svg>自动对齐工作平面 (物件)</button>
          <button>记录建构历史</button><button class="on">过滤器</button>
        </div>
        <span class="mem">可用的物理内存: 9700 MB</span>
        <button class="ic" aria-label="右侧栏">${this.dock(true)}</button>
      </footer>
      <div class="watermark">so0000.com</div>`;
  }
}
